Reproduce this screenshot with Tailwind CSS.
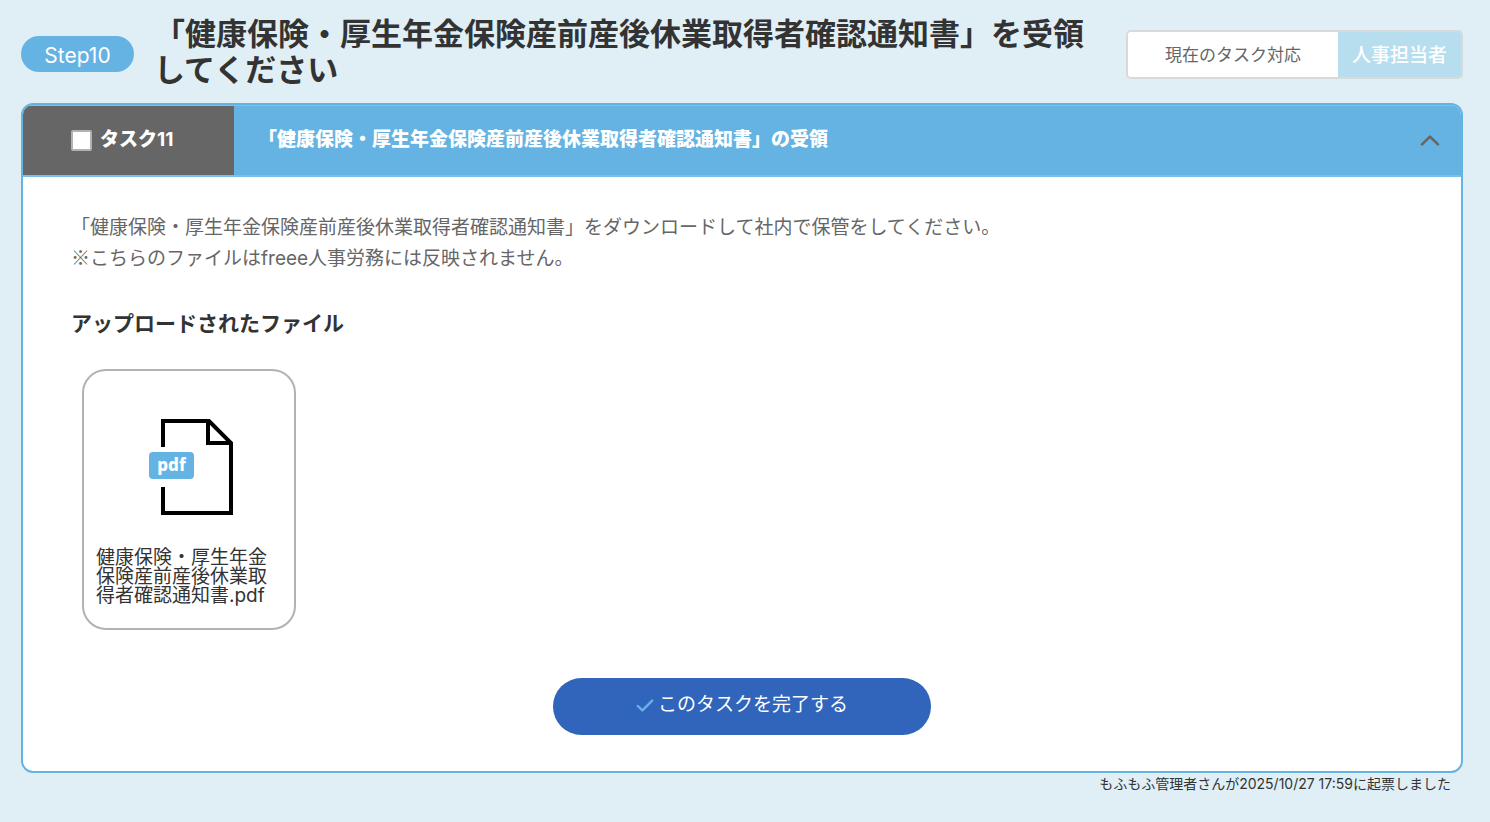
<!DOCTYPE html>
<html lang="ja">
<head>
    <meta charset="UTF-8">
    <meta name="viewport" content="width=device-width, initial-scale=1.0">
    <title>Step10 タスク11</title>
    <script src="https://cdn.jsdelivr.net/npm/@tailwindcss/browser@4"></script>
</head>
<body class="min-h-screen bg-[#e0eff6] pl-[21px] pr-[27px] font-['Inter','Noto_Sans_CJK_JP',sans-serif] text-[#333333]">
    <header class="flex items-center pt-4 pb-[13px]">
        <span class="shrink-0 w-[113px] h-9 mt-[2px] pt-[2px] rounded-full bg-[#64b3e3] text-white text-[21px] leading-9 text-center">Step10</span>
        <h1 class="flex-1 ml-5 mr-8 pb-[2px] text-[31px] leading-9 font-bold">「健康保険・厚生年金保険産前産後休業取得者確認通知書」を受領してください</h1>
        <div class="shrink-0 flex h-[49px] mt-[2px] rounded-[5px] border-2 border-[#d9d9d9] overflow-hidden">
            <span class="flex items-center bg-white px-[37px] pt-1 text-[17px] text-[#666666]">現在のタスク対応</span>
            <span class="flex items-center bg-[#b6deee] px-[14px] pt-1 text-[19px] font-medium text-white">人事担当者</span>
        </div>
    </header>

    <main>
        <section class="rounded-xl border-2 border-[#64b3e3] bg-white overflow-hidden">
            <div class="flex h-[72px] border-y border-[#7cbde9] border-b-2 bg-[#64b3e3] text-white text-[19px] font-black">
                <div class="flex items-center w-[211px] pl-12 bg-[#666666]">
                    <input type="checkbox" id="task11" class="appearance-none size-[21px] mr-2 rounded-[2px] border-2 border-[#b2b2b2] bg-white checked:bg-[#3065bb]">
                    <label for="task11">タスク<span class="font-bold">11</span></label>
                </div>
                <h2 class="flex-1 flex items-center pl-6">「健康保険・厚生年金保険産前産後休業取得者確認通知書」の受領</h2>
                <button type="button" aria-label="閉じる" class="px-[21px]">
                    <svg class="w-5 h-3" viewBox="0 0 20 12" fill="none" stroke="#666666" stroke-width="2.6" stroke-linecap="round" stroke-linejoin="round">
                        <path d="M2 9.4 L10 1.6 L18 9.4"/>
                    </svg>
                </button>
            </div>

            <div class="px-12 pt-[35px] pb-9">
                <p class="text-[19px] leading-[31px] text-[#666666]">「健康保険・厚生年金保険産前産後休業取得者確認通知書」をダウンロードして社内で保管をしてください。<br><span class="font-['Noto_Sans_CJK_JP',sans-serif] leading-none">※</span>こちらのファイルはfreee人事労務には反映されません。</p>
                <h3 class="mt-[34px] text-[21px] leading-8 font-bold">アップロードされたファイル</h3>

                <a href="#" class="block w-[214px] h-[261px] mt-[29px] ml-[11px] px-3 pt-12 rounded-3xl border-2 border-[#b2b2b2]">
                    <svg class="block w-[84px] h-24 ml-[53px]" viewBox="0 0 84 96">
                        <path d="M14 28 V2 H60 L82 24 V94 H14 V68" fill="none" stroke="#000" stroke-width="4"/>
                        <path d="M59 2 V24 H82" fill="none" stroke="#000" stroke-width="4"/>
                        <rect y="33" width="45" height="27" rx="4" fill="#64b3e3"/>
                        <text x="22.5" y="52" font-family="'Noto Sans','Open Sans',sans-serif" font-size="17" font-weight="800" fill="#fff" text-anchor="middle">pdf</text>
                    </svg>
                    <p class="mt-[33px] text-[19px] leading-[19px] break-all">健康保険・厚生年金保険産前産後休業取得者確認通知書.pdf</p>
                </a>

                <button type="button" class="flex items-center justify-center w-[378px] h-[57px] mx-auto mt-12 pb-[2px] rounded-full bg-[#3065bb] text-[19px] text-white">
                    <svg class="w-[18px] h-[14px] mr-1" viewBox="0 0 18 14" fill="none" stroke="#64b3e3" stroke-width="2.4" stroke-linecap="round" stroke-linejoin="round">
                        <path d="M1.8 7 L6.4 11.4 L16.2 1.6"/>
                    </svg>
                    このタスクを完了する
                </button>
            </div>
        </section>
        <p class="pr-3 text-right text-[14px] leading-[22px]">もふもふ管理者さんが2025/10/27 17:59に起票しました</p>
    </main>
</body>
</html>
